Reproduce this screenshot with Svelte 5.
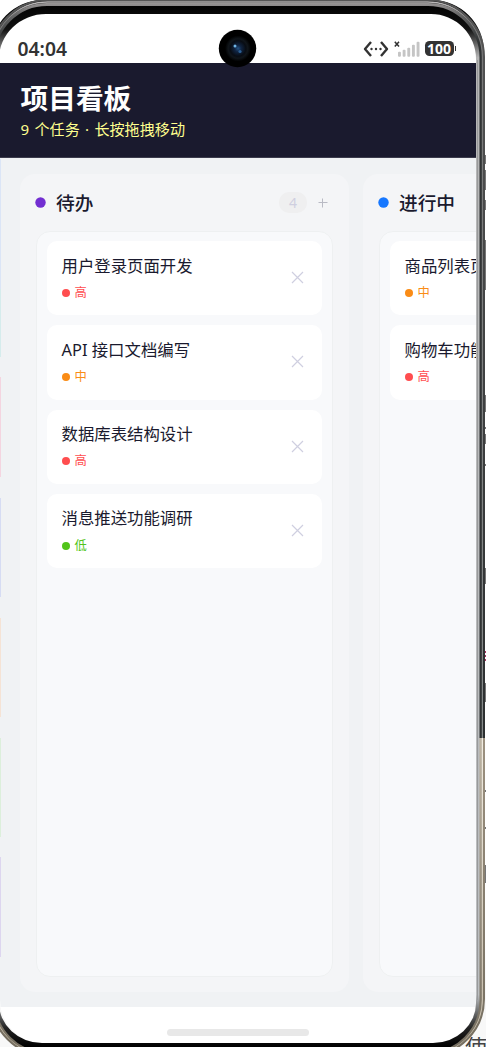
<script>
  const columns = [
    {
      title: '待办',
      color: '#722ed1',
      tasks: [
        { title: '用户登录页面开发', level: '高' },
        { title: 'API 接口文档编写', level: '中' },
        { title: '数据库表结构设计', level: '高' },
        { title: '消息推送功能调研', level: '低' }
      ]
    },
    {
      title: '进行中',
      color: '#1677ff',
      tasks: [
        { title: '商品列表页面', level: '中' },
        { title: '购物车功能', level: '高' }
      ]
    }
  ];

  const levelClass = { 高: 'high', 中: 'mid', 低: 'low' };

  // signal bars, left to right
  const bars = [5, 7, 9, 12, 15];

  // coloured slivers along the left edge of the screen
  const strips = [
    { y: 159, h: 130, color: '#dbe5f6' },
    { y: 289, h: 68, color: '#d5ecec' },
    { y: 377, h: 100, color: '#f4d5e0' },
    { y: 498, h: 99, color: '#d6dcf3' },
    { y: 618, h: 99, color: '#f5e3d5' },
    { y: 738, h: 99, color: '#dcefdb' },
    { y: 857, h: 100, color: '#ddd6ef' }
  ];

  // page content peeking out right of the phone
  const specks = [
    { y: 155, h: 9 }, { y: 170, h: 20 }, { y: 200, h: 10 }, { y: 240, h: 50 },
    { y: 395, h: 17 }, { y: 427, h: 2 }, { y: 434, h: 10 }, { y: 464, h: 2 },
    { y: 568, h: 16 }, { y: 651, h: 2, color: '#a83260' }, { y: 655, h: 2, color: '#a83260' },
    { y: 659, h: 2, color: '#a83260' }, { y: 683, h: 19 }, { y: 790, h: 2 },
    { y: 827, h: 2 }, { y: 865, h: 18 }
  ];
</script>

<div class="stage">
  <div class="backdrop"><span>使</span></div>

  <div class="phone">
    <div class="status">
      <span class="time">04:04</span>
      <div class="status-icons">
        <svg width="26" height="16" viewBox="0 0 26 16">
          <path d="M8 1 L2 8 L8 15 M18 1 L24 8 L18 15" fill="none" stroke="#333" stroke-width="2.4" stroke-linejoin="round" />
          <circle cx="8.5" cy="8" r="1.2" fill="#333" />
          <circle cx="13" cy="8" r="1.2" fill="#333" />
          <circle cx="17.5" cy="8" r="1.2" fill="#333" />
        </svg>
        <svg class="signal" width="26" height="16" viewBox="0 0 26 16">
          <path d="M.8 .8 L5 5.6 M5 .8 L.8 5.6" stroke="#333" stroke-width="1.5" />
          {#each bars as h, i}
            <rect x={4 + i * 4.65} y={15.7 - h} width="2.9" height={h} rx="1" fill="#c5c5c5" />
          {/each}
        </svg>
        <div class="battery">100</div>
        <i class="battery-tip"></i>
      </div>
    </div>

    <header>
      <h1>项目看板</h1>
      <p>9 个任务 · 长按拖拽移动</p>
    </header>

    <main>
      {#each columns as column}
        <section class="column">
          <div class="column-head">
            <svg class="dot" width="11" height="11"><circle cx="5.5" cy="5.5" r="5.2" fill={column.color} /></svg>
            <h2>{column.title}</h2>
            <span class="count">{column.tasks.length}</span>
            <svg class="plus" width="10" height="10"><path d="M0.5 4.5 H9.5 M4.5 .5 V9.5" stroke="#b9bac4" stroke-width="1" /></svg>
          </div>
          <div class="list">
            {#each column.tasks as task}
              <article class="card">
                <div>
                  <h3>{task.title}</h3>
                  <div class="level {levelClass[task.level]}"><i></i><span>{task.level}</span></div>
                </div>
                <svg width="13" height="13" viewBox="0 0 13 13"><path d="M1 1 L12 12 M12 1 L1 12" stroke="#cfcfe0" stroke-width="1.2" /></svg>
              </article>
            {/each}
          </div>
        </section>
      {/each}
    </main>

    <footer><i></i></footer>
  </div>

  <svg class="frame" width="486" height="1047" viewBox="0 0 486 1047">
    <defs>
      <linearGradient id="side" gradientUnits="userSpaceOnUse" x1="0" y1="0" x2="0" y2="1047">
        <stop offset="0" stop-color="#000" />
        <stop offset=".028" stop-color="#111" />
        <stop offset=".055" stop-color="#b5b5b5" />
        <stop offset=".95" stop-color="#bbbec0" />
        <stop offset=".982" stop-color="#222" />
        <stop offset="1" stop-color="#000" />
      </linearGradient>
      <linearGradient id="rim" gradientUnits="userSpaceOnUse" x1="0" y1="0" x2="0" y2="1047">
        <stop offset="0" stop-color="#a5a1a1" />
        <stop offset=".014" stop-color="#666" />
        <stop offset=".04" stop-color="#303334" />
        <stop offset=".705" stop-color="#303334" />
        <stop offset=".705" stop-color="#bdb4a4" />
        <stop offset="1" stop-color="#756e60" />
      </linearGradient>
      <linearGradient id="shine" gradientUnits="userSpaceOnUse" x1="0" y1="0" x2="0" y2="1047">
        <stop offset="0" stop-color="#c4c1c1" />
        <stop offset=".02" stop-color="#777" />
        <stop offset=".705" stop-color="#868a8a" />
        <stop offset=".705" stop-color="#f2ede2" />
        <stop offset="1" stop-color="#c2b8a6" />
      </linearGradient>
      <linearGradient id="edge" gradientUnits="userSpaceOnUse" x1="0" y1="0" x2="0" y2="1047">
        <stop offset="0" stop-color="#555" />
        <stop offset=".705" stop-color="#2b2e2f" />
        <stop offset=".705" stop-color="#9c9180" />
        <stop offset="1" stop-color="#756e60" />
      </linearGradient>
      <radialGradient id="lens">
        <stop offset="0" stop-color="#235182" />
        <stop offset=".25" stop-color="#102442" />
        <stop offset=".6" stop-color="#080c13" />
        <stop offset=".75" stop-color="#10151a" />
        <stop offset="1" stop-color="#000" />
      </radialGradient>
    </defs>
    {#each strips as s}
      <rect x="0" y={s.y} width="1" height={s.h} fill={s.color} />
    {/each}
    {#each specks as s}
      <rect x="484.5" y={s.y} width="1.5" height={s.h} fill={s.color ?? '#777'} />
    {/each}
    <path
      fill="url(#side)"
      fill-rule="evenodd"
      d="M42 0 H432 A52 52 0 0 1 484 52 V1000 A55 55 0 0 1 429 1055 H44 A55 55 0 0 1 -9 1000 V52 A52 52 0 0 1 42 0 Z
         M46 14 H431 A45 45 0 0 1 476 59 V1003 A43 40 0 0 1 433 1043 H42 A43 40 0 0 1 -1 1003 V59 A47 45 0 0 1 46 14 Z"
    />
    <rect x="-6" y="4.5" width="487" height="1049" rx="53" fill="none" stroke="url(#rim)" stroke-width="3" />
    <rect x="-7.5" y="2" width="490" height="1053" rx="55" fill="none" stroke="url(#shine)" stroke-width="1.4" />
    <rect x="-9" y="0" width="493" height="1056" rx="57" fill="none" stroke="url(#edge)" stroke-width="2" />
    <path d="M477.5 60 V1000" stroke="#98999a" />
    <circle cx="237.5" cy="48.5" r="18.7" fill="#000" />
    <circle cx="238" cy="48.5" r="13" fill="url(#lens)" />
    <circle cx="235" cy="46" r="1.5" fill="#70b5e5" />
    <circle cx="240" cy="51.5" r="1.6" fill="#2c6095" />
  </svg>
</div>

<style>
  :global(body) {
    margin: 0;
    background: #fff;
  }
  .stage {
    position: relative;
    width: 486px;
    height: 1047px;
    overflow: hidden;
    font-family: "Noto Sans", "Noto Sans CJK SC", sans-serif;
    color: #1a1a2e;
  }
  h1, h2, h3, p {
    margin: 0;
  }
  .backdrop {
    position: absolute;
    inset: 0;
    background: linear-gradient(#fff 0 940px, #f8f8f8 980px);
  }
  .backdrop span {
    position: absolute;
    left: 465px;
    top: 1034px;
    font-size: 22px;
    line-height: 24px;
    color: #444;
  }

  .phone {
    position: relative;
    width: 476px;
    height: 1029px;
    margin-top: 14px;
    border-radius: 46px 45px 43px 43px;
    overflow: hidden;
    background: #fff;
    display: flex;
    flex-direction: column;
  }
  .status {
    height: 49px;
    flex: none;
    box-sizing: border-box;
    padding: 20px 20px 0 17.5px;
    display: flex;
    justify-content: space-between;
  }
  .time {
    font-size: 19.3px;
    line-height: 29px;
    font-weight: 600;
    color: #333;
  }
  .status-icons {
    display: flex;
    align-items: center;
    height: 29px;
  }
  .signal {
    margin: 0 5px 0 5px;
  }
  .battery {
    width: 29px;
    height: 15px;
    border-radius: 4.5px;
    background: #333;
    color: #fff;
    font-size: 14px;
    line-height: 15.5px;
    font-weight: 700;
    text-align: center;
  }
  .battery-tip {
    width: 1.5px;
    height: 5px;
    margin-left: 1px;
    background: #333;
  }

  header {
    height: 95px;
    flex: none;
    box-sizing: border-box;
    padding: 17px 20px 0 20.5px;
    background: #1a1a2e;
    border-bottom: 1px solid #3c3c4d;
  }
  h1 {
    font-size: 27.7px;
    line-height: 36px;
    font-weight: 700;
    color: #fff;
  }
  header p {
    font-size: 15.1px;
    line-height: 22px;
    margin-top: 2px;
    word-spacing: 1.4px;
    color: #ffff8f;
  }

  main {
    flex: 1;
    min-height: 0;
    display: flex;
    gap: 14px;
    padding: 16px 20px 15px;
    background: #f0f2f4;
  }
  .column {
    width: 329px;
    flex: none;
    box-sizing: border-box;
    padding: 0 16px 15px;
    border-radius: 15px;
    background: #f4f5f7;
    display: flex;
    flex-direction: column;
  }
  .column-head {
    display: flex;
    align-items: center;
    height: 57px;
    flex: none;
    padding: 0 5px 0 0;
  }
  .dot {
    margin-left: -1px;
  }
  h2 {
    flex: 1;
    margin-left: 10px;
    font-size: 18.7px;
    line-height: 28px;
    font-weight: 500;
  }
  .count {
    width: 28px;
    height: 21px;
    margin-right: 11px;
    border-radius: 10px;
    background: #efeff0;
    color: #cfcfe0;
    font-size: 14px;
    line-height: 22px;
    text-align: center;
  }
  .list {
    flex: 1;
    box-sizing: border-box;
    padding: 9px 10px;
    border: 1px solid #eef0f1;
    border-width: 1.5px;
    border-radius: 14px;
    background: #f8f9fb;
    display: flex;
    flex-direction: column;
    gap: 10px;
  }
  .card {
    height: 74.3px;
    box-sizing: border-box;
    padding: 12.5px 18px 0 14.5px;
    border-radius: 10px;
    background: #fff;
    display: flex;
    justify-content: space-between;
  }
  .card > svg {
    flex: none;
    margin-top: 17.5px;
  }
  h3 {
    font-size: 16.4px;
    line-height: 24px;
    font-weight: 400;
    white-space: nowrap;
  }
  .level {
    display: flex;
    align-items: center;
    gap: 5px;
    margin-top: 6.3px;
    font-size: 12.3px;
    line-height: 18px;
  }
  .level i {
    width: 8px;
    height: 8px;
    border-radius: 50%;
    background: currentColor;
  }
  .high { color: #ff4d4f; }
  .mid { color: #fa8c16; }
  .low { color: #52c41a; }

  footer {
    height: 36px;
    flex: none;
    display: flex;
    justify-content: center;
    background: #fff;
  }
  footer i {
    width: 142px;
    height: 7px;
    margin-top: 22px;
    border-radius: 4px;
    background: #e8e8e8;
  }

  .frame {
    position: absolute;
    left: 0;
    top: 0;
  }
</style>
